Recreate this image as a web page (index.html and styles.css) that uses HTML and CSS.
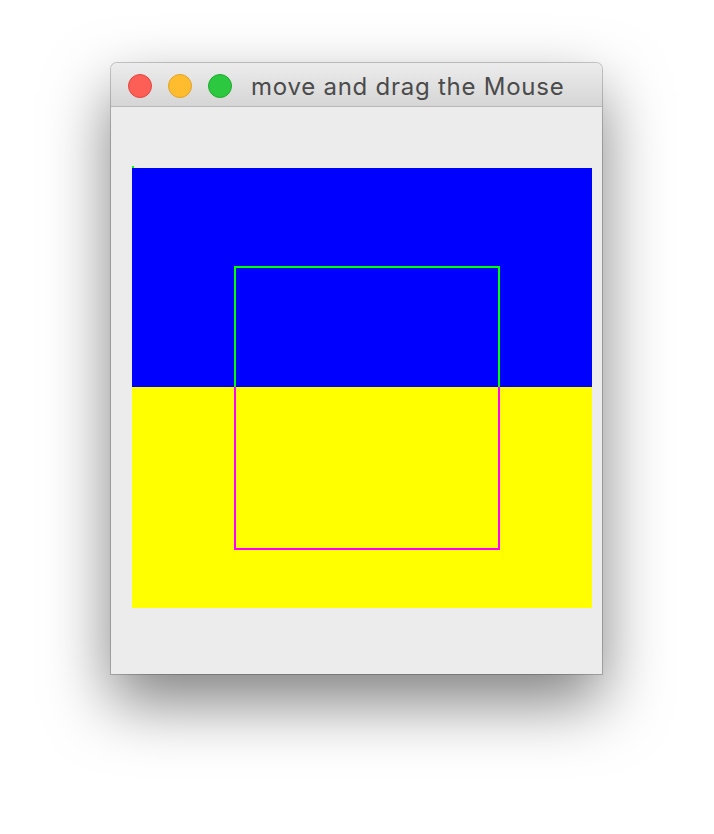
FILE: index.html
```html
<!DOCTYPE html>
<html>
<head>
<meta charset="utf-8">
<title>move and drag the Mouse</title>
<link rel="stylesheet" href="styles.css">
</head>
<body>
<div class="stage">
  <div class="window">
    <div class="titlebar">
      <div class="lights">
        <span class="light light-close"></span>
        <span class="light light-min"></span>
        <span class="light light-max"></span>
      </div>
      <div class="title">move and drag the Mouse</div>
    </div>
    <div class="content">
      <div class="canvas">
        <div class="dot-row"><span class="dot"></span></div>
        <div class="band band-blue"></div>
        <div class="band band-yellow"></div>
        <div class="selection"></div>
      </div>
    </div>
  </div>
</div>
</body>
</html>
```
FILE: styles.css
```css
html, body {
  margin: 0;
  padding: 0;
  background: #ffffff;
}
.stage {
  width: 714px;
  height: 834px;
  padding: 63px 0 0 111px;
  box-sizing: border-box;
  overflow: hidden;
}
.window {
  width: 491px;
  height: 611px;
  background: #ececec;
  border-radius: 6px 6px 0 0;
  box-shadow: 0 0 0 1px rgba(0, 0, 0, 0.2), 0 28px 64px rgba(0, 0, 0, 0.5);
  display: flex;
  flex-direction: column;
  overflow: hidden;
}
.titlebar {
  height: 43px;
  flex: none;
  border-bottom: 1px solid #b8b8b8;
  background: linear-gradient(to bottom, #ececec, #d6d6d6);
  display: flex;
  align-items: center;
  padding-left: 17px;
  gap: 19px;
}
.lights {
  display: flex;
  gap: 16px;
  padding-top: 2px;
}
.light {
  width: 22px;
  height: 22px;
  border-radius: 50%;
  border: 1px solid transparent;
}
.light-close { background: #fd5f57; border-color: #e2463f; }
.light-min { background: #febc2e; border-color: #e1a325; }
.light-max { background: #2bc840; border-color: #1dac2c; }
.title {
  font-family: Inter, "Open Sans", "Liberation Sans", sans-serif;
  font-size: 24px;
  color: #4b4b4b;
  letter-spacing: 0.75px;
  padding-top: 3px;
}
.content {
  flex: 1;
  padding: 59px 0 0 21px;
}
.canvas {
  position: relative;
  width: 460px;
  display: flex;
  flex-direction: column;
}
.dot-row {
  height: 2px;
}
.dot {
  display: block;
  width: 2px;
  height: 2px;
  background: #00ff00;
}
.band {
  width: 460px;
}
.band-blue {
  height: 219px;
  background: #0000ff;
}
.band-yellow {
  height: 221px;
  background: #ffff00;
}
.selection {
  position: absolute;
  left: 102px;
  top: 100px;
  width: 262px;
  height: 280px;
  border: 2px solid transparent;
  border-image: linear-gradient(to bottom, #00ff00 121px, #ff00ff 121px) 1;
}
```
